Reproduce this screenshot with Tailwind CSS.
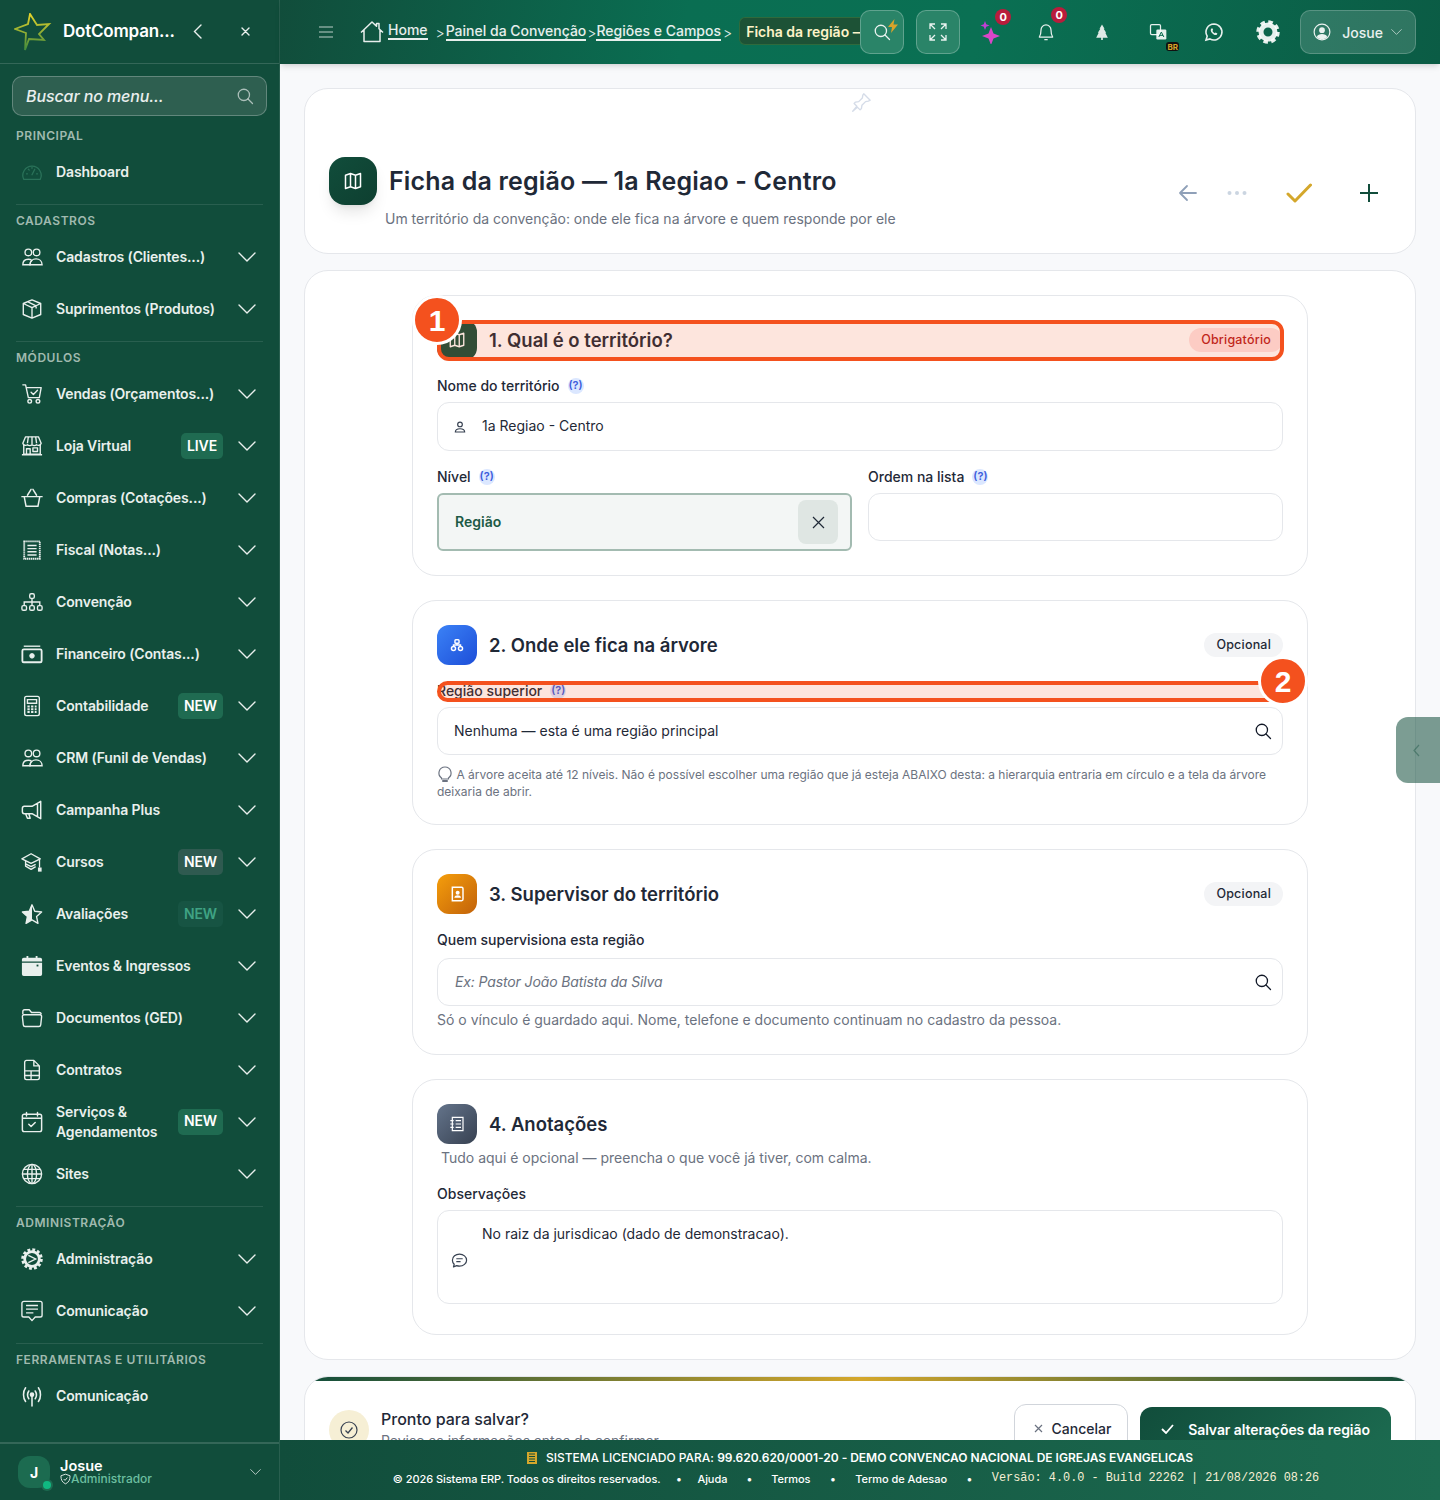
<!DOCTYPE html>
<html lang="pt-BR">
<head>
    <meta charset="UTF-8">
    <meta name="viewport" content="width=device-width, initial-scale=1.0">
    <title>Ficha da região</title>
    <script src="https://cdn.jsdelivr.net/npm/@tailwindcss/browser@4"></script>
</head>
<body class="bg-[#f8f9fb] text-gray-800 font-['Inter',sans-serif]">

    <!-- Icones repetidos -->
    <svg class="hidden" xmlns="http://www.w3.org/2000/svg">
        <symbol id="chev" viewBox="0 0 18 10"><path d="M1 1l8 8 8-8" fill="none" stroke="currentColor" stroke-width="1.4" stroke-linecap="round" stroke-linejoin="round"/></symbol>
        <symbol id="users" viewBox="0 0 24 24"><g fill="none" stroke="currentColor" stroke-width="1.5"><circle cx="8" cy="7" r="3.6"/><circle cx="17" cy="7" r="3.6"/><path d="M2 20.500c0-3.800 2.600-6 6-6 1.400 0 2.800.4 3.800 1.300-1.300 1-2 2.600-2 4.700z"/><path d="M9.800 20.500c0-4 3-6.500 6.600-6.500s6.600 2.500 6.600 6.500z"/></g></symbol>
        <symbol id="search" viewBox="0 0 24 24"><g fill="none" stroke="currentColor" stroke-width="1.700" stroke-linecap="round"><circle cx="10.500" cy="10.500" r="7.500"/><path d="M16 16l6 6"/></g></symbol>
        <symbol id="map" viewBox="0 0 24 24"><path d="M3 5l6-2 6 2 6-2v16l-6 2-6-2-6 2zM9 3v16M15 5v16" fill="none" stroke="currentColor" stroke-width="1.800" stroke-linejoin="round"/></symbol>
        <symbol id="person" viewBox="0 0 24 24"><g fill="none" stroke="currentColor" stroke-width="2"><circle cx="12" cy="7.500" r="4"/><path d="M4 20.500c0-4 3.500-5.500 8-5.500s8 1.500 8 5.500z"/></g></symbol>
    </svg>

    <div class="relative flex w-[1440px] h-[1500px] overflow-hidden">

        <!-- Sidebar -->
        <aside class="flex flex-col w-[280px] h-full shrink-0 bg-[#114d3b] text-[#e9f0ed] border-r border-white/10">
            <div class="flex items-center h-16 shrink-0 border-b border-white/15 pl-[14px]">
                <svg class="w-[38px] h-[38px]" viewBox="0 0 38 38"><defs><linearGradient id="logo" x1="0" y1="0" x2="0" y2="1"><stop offset="0" stop-color="#e6d32a"/><stop offset="1" stop-color="#3f8a3d"/></linearGradient></defs><path d="M16 1l7 11 12-1-10 10 5 6-15-1-4 11 1-17-11-4 13-5z" fill="none" stroke="url(#logo)" stroke-width="1.800" stroke-linejoin="miter"/></svg>
                <span class="ml-[11px] w-[112px] text-[17px] font-semibold tracking-[-0.2px] text-white whitespace-nowrap">DotCompan...</span>
                <svg class="w-[9px] h-[15px] ml-[18px]" viewBox="0 0 9 15"><path d="M8 1L1.500 7.500 8 14" fill="none" stroke="currentColor" stroke-width="1.400" stroke-linecap="round"/></svg>
                <svg class="w-[9px] h-[9px] ml-[39px]" viewBox="0 0 9 9"><path d="M1 1l7 7M8 1L1 8" fill="none" stroke="currentColor" stroke-width="1.400" stroke-linecap="round"/></svg>
            </div>

            <div class="flex items-center h-10 mt-3 mx-3 px-[13px] rounded-[10px] bg-[#2e5f50] border border-white/25">
                <span class="flex-1 text-[16px] italic font-medium tracking-[-0.1px] text-white/90">Buscar no menu...</span>
                <svg class="w-[18px] h-[18px] -mr-[1px] text-white/60"><use href="#search"/></svg>
            </div>

            <nav class="flex-1 mt-[11px] tracking-[-0.12px]">
                <p class="h-4 mx-4 mb-[3px] text-[12px] leading-[18px] font-semibold tracking-[0.55px] text-[#a0baaf]">PRINCIPAL</p>
                <a class="flex items-center h-[52px] pl-[21px] pr-[23px] text-[14px] font-semibold">
                    <svg class="w-[22px] h-[22px] text-[#2a7259]" viewBox="0 0 24 24"><g fill="none" stroke="currentColor" stroke-width="1.400" stroke-linecap="round"><path d="M3 20a10 10 0 1 1 18 0z"/><path d="M12 15l3-6M6 14h1M17 14h1M8 9l1 1M12 7v1"/></g></svg>
                    <span class="ml-[13px] pb-[2px]">Dashboard</span>
                </a>

                <div class="mx-4 mt-[6px] pt-[7px] border-t border-white/10">
                    <p class="h-4 mb-[3px] text-[12px] leading-[18px] font-semibold tracking-[0.55px] text-[#a0baaf]">CADASTROS</p>
                </div>
                <a class="flex items-center h-[52px] pl-[21px] pr-[23px] text-[14px] font-semibold">
                    <svg class="w-[22px] h-[22px]"><use href="#users"/></svg>
                    <span class="ml-[13px] pb-[2px] flex-1">Cadastros (Clientes...)</span>
                    <svg class="w-[18px] h-[10px]"><use href="#chev"/></svg>
                </a>
                <a class="flex items-center h-[52px] pl-[21px] pr-[23px] text-[14px] font-semibold">
                    <svg class="w-[22px] h-[22px]" viewBox="0 0 24 24"><path d="M12 2l9.500 4v12L12 22l-9.500-4V6zM2.500 6l9.500 4.500L21.500 6M12 10.500V22M7 4l9.500 4.500v3" fill="none" stroke="currentColor" stroke-width="1.500" stroke-linejoin="round"/></svg>
                    <span class="ml-[13px] pb-[2px] flex-1">Suprimentos (Produtos)</span>
                    <svg class="w-[18px] h-[10px]"><use href="#chev"/></svg>
                </a>

                <div class="mx-4 mt-[6px] pt-[7px] border-t border-white/10">
                    <p class="h-4 mb-[3px] text-[12px] leading-[18px] font-semibold tracking-[0.55px] text-[#a0baaf]">MÓDULOS</p>
                </div>
                <a class="flex items-center h-[52px] pl-[21px] pr-[23px] text-[14px] font-semibold">
                    <svg class="w-[22px] h-[22px]" viewBox="0 0 24 24"><g fill="none" stroke="currentColor" stroke-width="1.500" stroke-linecap="round" stroke-linejoin="round"><path d="M2 2h3l3 14h12l2-11H6"/><path d="M11 10l2.500 2.500L18 8"/><circle cx="9.500" cy="20" r="2"/><circle cx="18.500" cy="20" r="2"/></g></svg>
                    <span class="ml-[13px] pb-[2px] flex-1">Vendas (Orçamentos...)</span>
                    <svg class="w-[18px] h-[10px]"><use href="#chev"/></svg>
                </a>
                <a class="flex items-center h-[52px] pl-[21px] pr-[23px] text-[14px] font-semibold">
                    <svg class="w-[22px] h-[22px]" viewBox="0 0 24 24"><g fill="none" stroke="currentColor" stroke-width="1.500" stroke-linejoin="round"><path d="M5 2h14l3 7a3 3 0 0 1-5 1.500 3.500 3.500 0 0 1-5 0 3.500 3.500 0 0 1-5 0A3 3 0 0 1 2 9z"/><path d="M3 11v10h18V11M1 21.500h22M6 21v-6h4v6M13 14h5v4h-5z"/><path d="M8 2L7 9M16 2l1 7M12 2v8"/></g></svg>
                    <span class="ml-[13px] pb-[2px] flex-1">Loja Virtual</span>
                    <span class="flex items-center h-[26px] px-[6px] pb-[2px] mr-[15px] rounded-[5px] bg-[#1f6b51] text-[14px] font-semibold text-white">LIVE</span>
                    <svg class="w-[18px] h-[10px]"><use href="#chev"/></svg>
                </a>
                <a class="flex items-center h-[52px] pl-[21px] pr-[23px] text-[14px] font-semibold">
                    <svg class="w-[22px] h-[22px]" viewBox="0 0 24 24"><path d="M1 10.500h22M3.500 10.500l2 10.500h13l2-10.500M7 9l4-6.500M17 9l-4-6.500" fill="none" stroke="currentColor" stroke-width="1.600" stroke-linecap="round" stroke-linejoin="round"/></svg>
                    <span class="ml-[13px] pb-[2px] flex-1">Compras (Cotações...)</span>
                    <svg class="w-[18px] h-[10px]"><use href="#chev"/></svg>
                </a>
                <a class="flex items-center h-[52px] pl-[21px] pr-[23px] text-[14px] font-semibold">
                    <svg class="w-[22px] h-[22px]" viewBox="0 0 24 24"><path d="M3.500 2.500h17v19h-17z" fill="none" stroke="currentColor" stroke-width="2" stroke-dasharray="1.600 .6"/><path d="M7 7h10M7 10.500h10M7 14h10M7 17.500h10" fill="none" stroke="currentColor" stroke-width="1.600"/></svg>
                    <span class="ml-[13px] pb-[2px] flex-1">Fiscal (Notas...)</span>
                    <svg class="w-[18px] h-[10px]"><use href="#chev"/></svg>
                </a>
                <a class="flex items-center h-[52px] pl-[21px] pr-[23px] text-[14px] font-semibold">
                    <svg class="w-[22px] h-[22px]" viewBox="0 0 24 24"><g fill="none" stroke="currentColor" stroke-width="1.500"><rect x="9.500" y="3" width="5" height="5" rx="1.500"/><rect x="1" y="16" width="5" height="5" rx="1.500"/><rect x="9.500" y="16" width="5" height="5" rx="1.500"/><rect x="18" y="16" width="5" height="5" rx="1.500"/><path d="M12 8v8M3.500 16v-4h17v4"/></g></svg>
                    <span class="ml-[13px] pb-[2px] flex-1">Convenção</span>
                    <svg class="w-[18px] h-[10px]"><use href="#chev"/></svg>
                </a>
                <a class="flex items-center h-[52px] pl-[21px] pr-[23px] text-[14px] font-semibold">
                    <svg class="w-[22px] h-[22px]" viewBox="0 0 24 24"><g fill="none" stroke="currentColor"><path d="M3 3.500h18" stroke-width="1.500"/><rect x="1.500" y="7" width="21" height="14" rx="1.500" stroke-width="2"/><circle cx="12" cy="14" r="2.500" fill="currentColor"/></g></svg>
                    <span class="ml-[13px] pb-[2px] flex-1">Financeiro (Contas...)</span>
                    <svg class="w-[18px] h-[10px]"><use href="#chev"/></svg>
                </a>
                <a class="flex items-center h-[52px] pl-[21px] pr-[23px] text-[14px] font-semibold">
                    <svg class="w-[22px] h-[22px]" viewBox="0 0 24 24"><g fill="none" stroke="currentColor" stroke-width="1.500"><rect x="4" y="1.500" width="16" height="21" rx="2"/><path d="M7 5h10v4H7z"/><path d="M7 12.500h2.500M11 12.500h2.500M15 12.500h2M7 15.500h2.500M11 15.500h2.500M15 15.500h2M7 18.500h2.500M11 18.500h2.500M15 18.500h2" stroke-width="2"/></g></svg>
                    <span class="ml-[13px] pb-[2px] flex-1">Contabilidade</span>
                    <span class="flex items-center h-[26px] px-[6px] pb-[2px] mr-[15px] rounded-[5px] bg-[#1f6b51] text-[14px] font-semibold text-white">NEW</span>
                    <svg class="w-[18px] h-[10px]"><use href="#chev"/></svg>
                </a>
                <a class="flex items-center h-[52px] pl-[21px] pr-[23px] text-[14px] font-semibold">
                    <svg class="w-[22px] h-[22px]"><use href="#users"/></svg>
                    <span class="ml-[13px] pb-[2px] flex-1">CRM (Funil de Vendas)</span>
                    <svg class="w-[18px] h-[10px]"><use href="#chev"/></svg>
                </a>
                <a class="flex items-center h-[52px] pl-[21px] pr-[23px] text-[14px] font-semibold">
                    <svg class="w-[22px] h-[22px]" viewBox="0 0 24 24"><path d="M21.500 2.500v19L12 16H3.500A2 2 0 0 1 1.500 14V10a2 2 0 0 1 2-2H12zM5 16l2 5h3l-1.500-5M18 5v14" fill="none" stroke="currentColor" stroke-width="1.600" stroke-linejoin="round"/></svg>
                    <span class="ml-[13px] pb-[2px] flex-1">Campanha Plus</span>
                    <svg class="w-[18px] h-[10px]"><use href="#chev"/></svg>
                </a>
                <a class="flex items-center h-[52px] pl-[21px] pr-[23px] text-[14px] font-semibold">
                    <svg class="w-[22px] h-[22px]" viewBox="0 0 24 24"><g fill="none" stroke="currentColor" stroke-width="1.500" stroke-linejoin="round"><path d="M11 3L1 8.500l10 5 10-5z"/><path d="M5 11v5.500l6 3.500 5-3M5 14l6 3 5-2.500"/></g><rect x="19.500" y="9" width="1.400" height="9" fill="currentColor"/><rect x="18.500" y="18" width="4" height="4.500" fill="currentColor"/></svg>
                    <span class="ml-[13px] pb-[2px] flex-1">Cursos</span>
                    <span class="flex items-center h-[26px] px-[6px] pb-[2px] mr-[15px] rounded-[5px] bg-[#2f5a50] text-[14px] font-semibold text-white">NEW</span>
                    <svg class="w-[18px] h-[10px]"><use href="#chev"/></svg>
                </a>
                <a class="flex items-center h-[52px] pl-[21px] pr-[23px] text-[14px] font-semibold">
                    <svg class="w-[22px] h-[22px]" viewBox="0 0 24 24"><path d="M12 2l3 7 7.500.800-5.500 5 1.500 7.400L12 18.500 5.500 22.200 7 14.800l-5.500-5L9 9z" fill="none" stroke="currentColor" stroke-width="1.500" stroke-linejoin="round"/><path d="M12 2L9 9l-7.500.800 5.500 5-1.500 7.400L12 18.500z" fill="currentColor"/></svg>
                    <span class="ml-[13px] pb-[2px] flex-1">Avaliações</span>
                    <span class="flex items-center h-[26px] px-[6px] pb-[2px] mr-[15px] rounded-[5px] bg-[#175443] text-[14px] font-semibold text-[#3fa384]">NEW</span>
                    <svg class="w-[18px] h-[10px]"><use href="#chev"/></svg>
                </a>
                <a class="flex items-center h-[52px] pl-[21px] pr-[23px] text-[14px] font-semibold">
                    <svg class="w-[22px] h-[22px]" viewBox="0 0 24 24"><path d="M6 1h2v2h8V1h2v2h3a2 2 0 0 1 2 2v2H1V5a2 2 0 0 1 2-2h3zM1 8.500h22V21a2 2 0 0 1-2 2H3a2 2 0 0 1-2-2z" fill="currentColor"/><rect x="17" y="10.500" width="2" height="2" fill="#114d3b"/></svg>
                    <span class="ml-[13px] pb-[2px] flex-1">Eventos &amp; Ingressos</span>
                    <svg class="w-[18px] h-[10px]"><use href="#chev"/></svg>
                </a>
                <a class="flex items-center h-[52px] pl-[21px] pr-[23px] text-[14px] font-semibold">
                    <svg class="w-[22px] h-[22px]" viewBox="0 0 24 24"><path d="M2 8V5a2 2 0 0 1 2-2h5l2.500 3H20a2 2 0 0 1 2 2M3.500 8.500h17a2 2 0 0 1 2 2l-1 9a2 2 0 0 1-2 1.800H4.500a2 2 0 0 1-2-1.800l-1-9a2 2 0 0 1 2-2z" fill="none" stroke="currentColor" stroke-width="1.500" stroke-linejoin="round"/></svg>
                    <span class="ml-[13px] pb-[2px] flex-1">Documentos (GED)</span>
                    <svg class="w-[18px] h-[10px]"><use href="#chev"/></svg>
                </a>
                <a class="flex items-center h-[52px] pl-[21px] pr-[23px] text-[14px] font-semibold">
                    <svg class="w-[22px] h-[22px]" viewBox="0 0 24 24"><path d="M14 1.500H6a2 2 0 0 0-2 2v17a2 2 0 0 0 2 2h12a2 2 0 0 0 2-2V7.500zM14 1.500v6h6M4 13h16M4 18h16M11 13v9" fill="none" stroke="currentColor" stroke-width="1.500" stroke-linejoin="round"/></svg>
                    <span class="ml-[13px] pb-[2px] flex-1">Contratos</span>
                    <svg class="w-[18px] h-[10px]"><use href="#chev"/></svg>
                </a>
                <a class="flex items-center h-[52px] pl-[21px] pr-[23px] text-[14px] font-semibold leading-5">
                    <svg class="w-[22px] h-[22px] shrink-0" viewBox="0 0 24 24"><path d="M6 1.500v4M18 1.500v4M1.500 8h21M3.500 3.500h17a2 2 0 0 1 2 2V20.500a2 2 0 0 1-2 2h-17a2 2 0 0 1-2-2V5.500a2 2 0 0 1 2-2zM8.500 14.500l2.500 2.500 4.500-4.500" fill="none" stroke="currentColor" stroke-width="1.600" stroke-linecap="round" stroke-linejoin="round"/></svg>
                    <span class="ml-[13px] flex-1">Serviços &amp;<br>Agendamentos</span>
                    <span class="flex items-center h-[26px] px-[6px] pb-[2px] mr-[15px] rounded-[5px] bg-[#1f6b51] text-[14px] font-semibold text-white">NEW</span>
                    <svg class="w-[18px] h-[10px]"><use href="#chev"/></svg>
                </a>
                <a class="flex items-center h-[52px] pl-[21px] pr-[23px] text-[14px] font-semibold">
                    <svg class="w-[22px] h-[22px]" viewBox="0 0 24 24"><g fill="none" stroke="currentColor" stroke-width="1.500"><circle cx="12" cy="12" r="10.500"/><ellipse cx="12" cy="12" rx="5" ry="10.500"/><path d="M12 1.500v21M1.500 12h21M3 7h18M3 17h18"/></g></svg>
                    <span class="ml-[13px] pb-[2px] flex-1">Sites</span>
                    <svg class="w-[18px] h-[10px]"><use href="#chev"/></svg>
                </a>

                <div class="mx-4 mt-[6px] pt-[7px] border-t border-white/10">
                    <p class="h-4 mb-[3px] text-[12px] leading-[18px] font-semibold tracking-[0.55px] text-[#a0baaf]">ADMINISTRAÇÃO</p>
                </div>
                <a class="flex items-center h-[52px] pl-[21px] pr-[23px] text-[14px] font-semibold">
                    <svg class="w-[22px] h-[22px]" viewBox="0 0 24 24"><g fill="none" stroke="currentColor"><circle cx="12" cy="12" r="8" stroke-width="3"/><circle cx="12" cy="12" r="10" stroke-width="3.500" stroke-dasharray="3 2.240"/><path d="M8 8l8 4-8 4" stroke-width="1.500"/></g></svg>
                    <span class="ml-[13px] pb-[2px] flex-1">Administração</span>
                    <svg class="w-[18px] h-[10px]"><use href="#chev"/></svg>
                </a>
                <a class="flex items-center h-[52px] pl-[21px] pr-[23px] text-[14px] font-semibold">
                    <svg class="w-[22px] h-[22px]" viewBox="0 0 24 24"><path d="M3 1.500h18a2 2 0 0 1 2 2v13a2 2 0 0 1-2 2h-5.500L12 22.500 8.500 18.500H3a2 2 0 0 1-2-2v-13a2 2 0 0 1 2-2zM5.500 6h13M5.500 10h13M5.500 14h8" fill="none" stroke="currentColor" stroke-width="1.500" stroke-linejoin="round"/></svg>
                    <span class="ml-[13px] pb-[2px] flex-1">Comunicação</span>
                    <svg class="w-[18px] h-[10px]"><use href="#chev"/></svg>
                </a>

                <div class="mx-4 mt-[6px] pt-[7px] border-t border-white/10">
                    <p class="h-4 mb-[3px] text-[12px] leading-[18px] font-semibold tracking-[0.55px] text-[#a0baaf]">FERRAMENTAS E UTILITÁRIOS</p>
                </div>
                <a class="flex items-center h-[52px] pl-[21px] pr-[23px] text-[14px] font-semibold">
                    <svg class="w-[22px] h-[22px]" viewBox="0 0 24 24"><g fill="none" stroke="currentColor" stroke-width="1.700" stroke-linecap="round"><path d="M5 3C2 7 2 14 5 18M19 3c3 4 3 11 0 15M8.500 6.500c-1.600 2.500-1.600 6 0 8.500M15.500 6.500c1.600 2.500 1.600 6 0 8.500M12 12v11"/></g><circle cx="12" cy="10.500" r="2.500" fill="currentColor"/></svg>
                    <span class="ml-[13px] pb-[2px]">Comunicação</span>
                </a>
            </nav>

            <div class="flex items-center h-[58px] shrink-0 border-t-2 border-white/15 pl-[18px] pr-[18px]">
                <div class="relative flex items-center justify-center w-8 h-8 rounded-xl bg-[#1c6b50] text-[14px] font-bold text-white">
                    J
                    <span class="absolute -right-[1px] -bottom-[1px] w-[8px] h-[8px] rounded-full bg-[#10b981] ring-2 ring-[#1c6b50]"></span>
                </div>
                <div class="flex-1 ml-[10px]">
                    <p class="text-[14.500px] leading-[13px] font-semibold text-white">Josue</p>
                    <p class="flex items-center text-[12px] leading-[13px] font-medium text-[#6cbfa0]">
                        <svg class="w-[11px] h-[12px]" viewBox="0 0 24 24"><path d="M12 1.500l10 3.500c0 9-3 14.500-10 17.500C5 19.500 2 14 2 5zM8 12l3 3 5-6" fill="none" stroke="#e9f0ed" stroke-width="2"/></svg>
                        Administrador
                    </p>
                </div>
                <svg class="w-[11px] h-[6px] text-white/80"><use href="#chev"/></svg>
            </div>
        </aside>

        <!-- Coluna principal -->
        <div class="flex flex-col flex-1 min-w-0">

            <!-- Topbar -->
            <header class="flex items-center h-16 shrink-0 pl-[39px] shadow-md bg-[linear-gradient(100deg,#114d3b_0%,#0a6e52_35%,#0a7053_60%,#0b5c45_100%)] text-white/90">
                <svg class="w-[14px] h-[12px]" viewBox="0 0 14 12"><path d="M0 1h14M0 6h14M0 11h14" stroke="currentColor" stroke-width="1.200" opacity=".8"/></svg>
                <svg class="w-6 h-6 ml-[27px]" viewBox="0 0 24 24"><path d="M1 12.500L12 2l4.500 4.300V3.500h2.500v5.200l4 3.800M4 10v11.500h16V10" fill="none" stroke="currentColor" stroke-width="1.500" stroke-linejoin="round"/></svg>
                <a class="ml-[4px] mb-[3px] border-b-2 border-white/90 text-[14px] leading-[17px] font-medium">Home</a>
                <span class="ml-[8px] text-[14px] font-light">&gt;</span>
                <a class="ml-[1px] mb-[2px] border-b-2 border-white/90 text-[14px] leading-[17px] font-medium whitespace-nowrap">Painel da Convenção</a>
                <span class="ml-[1px] text-[14px] font-light">&gt;</span>
                <a class="mb-[2px] border-b-2 border-white/90 text-[14px] leading-[17px] font-medium whitespace-nowrap">Regiões e Campos</a>
                <span class="ml-[2px] text-[14px] font-light">&gt;</span>
                <div class="ml-[7px] mb-[2px] flex items-center h-7 w-[121px] shrink-0 pl-[6px] rounded-l-md bg-[#1d5236] border border-[#2f6a3c] border-r-0 overflow-hidden text-[14px] font-semibold text-[#fdf3c8] whitespace-nowrap">Ficha da região —</div>

                <button class="relative flex items-center justify-center w-11 h-11 shrink-0 rounded-[10px] bg-[#2a8468] border border-white/25">
                    <svg class="w-[18px] h-[18px]"><use href="#search"/></svg>
                    <svg class="absolute top-[8px] right-[5px] w-[10px] h-[14px]" viewBox="0 0 10 14"><path d="M6.500 0L0 8h4l-1 6 7-8.500H5.500z" fill="#d9a32a"/></svg>
                </button>
                <button class="flex items-center justify-center w-11 h-11 shrink-0 ml-3 rounded-[10px] bg-[#2a8468] border border-white/25">
                    <svg class="w-[18px] h-[18px]" viewBox="0 0 18 18"><path d="M1 6V1h5M1 1l5 5M12 1h5v5M17 1l-5 5M1 12v5h5M1 17l5-5M17 12v5h-5M17 17l-5-5" fill="none" stroke="currentColor" stroke-width="1.300"/></svg>
                </button>
                <div class="relative w-6 h-6 shrink-0 ml-[19px]">
                    <svg class="w-6 h-6" viewBox="0 0 24 24"><path d="M12 7l2.500 6.500L21 16l-6.500 2.500L12 25l-2.500-6.500L3 16l6.500-2.500z" fill="#d946c8"/><path d="M6 1l1.200 3.300L10.500 5.500 7.200 6.800 6 10 4.800 6.800 1.500 5.500l3.300-1.200z" fill="#c13fd4"/></svg>
                    <span class="absolute -top-[11px] left-[16px] flex items-center justify-center w-4 h-4 rounded-full bg-[#b91c3c] text-[11px] font-bold text-white">0</span>
                </div>
                <div class="relative w-6 h-6 shrink-0 ml-[31px]">
                    <svg class="w-5 h-5 m-[2px]" viewBox="0 0 24 24"><path d="M12 3.500a6 6 0 0 0-6 6c0 5-1 7-2 8.500h16c-1-1.500-2-3.500-2-8.500a6 6 0 0 0-6-6zM10 21h4" fill="none" stroke="currentColor" stroke-width="1.500" stroke-linejoin="round"/></svg>
                    <span class="absolute -top-[13px] left-[17px] flex items-center justify-center w-4 h-4 rounded-full bg-[#b91c3c] text-[11px] font-bold text-white">0</span>
                </div>
                <svg class="w-5 h-5 shrink-0 ml-[34px] text-[#dfeae6]" viewBox="0 0 24 24"><path d="M12 3l3 5h-1l3 5h-1l3 6h-6v2.500h-2V19H5l3-6H7l3-5H9z" fill="currentColor"/></svg>
                <div class="relative w-6 h-6 shrink-0 ml-[34px]">
                    <svg class="w-5 h-5 m-[2px]" viewBox="0 0 24 24"><rect x="3" y="3" width="12" height="12" rx="1.500" fill="none" stroke="currentColor" stroke-width="1.500"/><rect x="10" y="9" width="12" height="12" rx="1.500" fill="currentColor"/><path d="M13 18l3-6 3 6M14 16h4" fill="none" stroke="#0a6a4e" stroke-width="1.200"/></svg>
                    <span class="absolute -bottom-[7px] left-[20px] flex items-center justify-center w-[13px] h-[9px] rounded-[3px] bg-[#111] text-[8px] font-bold text-[#d9a32a]">BR</span>
                </div>
                <svg class="w-6 h-6 shrink-0 ml-8" viewBox="0 0 24 24"><path d="M12 4a8 8 0 0 0-6.800 12.200L4 20l3.900-1.100A8 8 0 1 0 12 4z" fill="none" stroke="currentColor" stroke-width="1.600"/><path d="M9.500 8.500c-1.200.8-1 2.800.5 4.500s3.200 2.600 4.800 1.800l.6-1.300-1.800-1-.8.800c-1-.4-2-1.400-2.400-2.500l.8-.7-.9-1.900z" fill="currentColor"/></svg>
                <svg class="w-6 h-6 shrink-0 ml-[30px]" viewBox="0 0 24 24"><circle cx="12" cy="12" r="7" fill="none" stroke="currentColor" stroke-width="5"/><circle cx="12" cy="12" r="10" fill="none" stroke="currentColor" stroke-width="3.500" stroke-dasharray="4.500 3.350"/></svg>
                <button class="flex items-center w-[116px] h-11 shrink-0 ml-5 pl-[12px] rounded-[10px] bg-white/15 border border-white/20">
                    <svg class="w-[18px] h-[18px]" viewBox="0 0 24 24"><circle cx="12" cy="12" r="10.500" fill="none" stroke="currentColor" stroke-width="1.600"/><circle cx="12" cy="9.500" r="3.800" fill="currentColor"/><path d="M5 18.500c1-3 4-4 7-4s6 1 7 4c-2 2-4.500 3-7 3s-5-1-7-3z" fill="currentColor"/></svg>
                    <span class="ml-[11px] text-[14px] font-medium">Josue</span>
                    <svg class="w-[11px] h-[6px] ml-2 text-white/70"><use href="#chev"/></svg>
                </button>
            </header>

            <main class="flex-1 min-h-0 px-6 pt-6">

                <!-- Cabecalho da ficha -->
                <section class="relative h-[166px] rounded-3xl border border-[#e5e7eb] bg-white">
                    <svg class="absolute left-[545px] top-[3px] w-[22px] h-[22px] text-[#d5dce8]" viewBox="0 0 24 24"><path d="M15 2l7 7-2 1-3 .500-4 4-.500 3.500-1.500 1.500-3-3L3 21l4.500-5.500-3-3L6 11l3.500-.500 4-4 .500-3z" fill="none" stroke="currentColor" stroke-width="1.500" stroke-linejoin="round"/></svg>
                    <div class="flex pl-6 pt-[68px]">
                        <div class="flex items-center justify-center w-12 h-12 shrink-0 rounded-2xl bg-[linear-gradient(135deg,#114d3b,#0e3f30)] shadow-lg text-white">
                            <svg class="w-5 h-5"><use href="#map"/></svg>
                        </div>
                        <div class="ml-3">
                            <h1 class="text-[25px] leading-[48px] font-semibold tracking-[0.17px] text-[#1f2937] whitespace-nowrap">Ficha da região — 1a Regiao - Centro</h1>
                            <p class="-ml-1 mt-[4px] text-[14px] leading-5 text-[#6b7280]">Um território da convenção: onde ele fica na árvore e quem responde por ele</p>
                        </div>
                    </div>
                    <div class="absolute top-[94px] right-[37px] flex items-center">
                        <svg class="w-5 h-5 text-[#8fa0b8]" viewBox="0 0 20 20"><path d="M18 10H2M9 3l-7 7 7 7" fill="none" stroke="currentColor" stroke-width="1.800" stroke-linecap="round" stroke-linejoin="round"/></svg>
                        <svg class="w-5 h-[6px] ml-[29px] text-[#cbd5e1]" viewBox="0 0 20 6"><circle cx="2.500" cy="3" r="2" fill="currentColor"/><circle cx="10" cy="3" r="2" fill="currentColor"/><circle cx="17.500" cy="3" r="2" fill="currentColor"/></svg>
                        <svg class="w-[26px] h-5 ml-[39px] text-[#d4a72c]" viewBox="0 0 26 20"><path d="M2 11l7 7L24.500 2" fill="none" stroke="currentColor" stroke-width="3" stroke-linecap="round" stroke-linejoin="round"/></svg>
                        <svg class="w-[18px] h-[18px] ml-[48px] text-[#114d3b]" viewBox="0 0 18 18"><path d="M9 0v18M0 9h18" stroke="currentColor" stroke-width="2"/></svg>
                    </div>
                </section>

                <!-- Formulario -->
                <section class="mt-4 rounded-3xl border border-[#e5e7eb] bg-white pt-6 pb-6">
                    <div class="flex flex-col gap-6 w-[896px] mx-auto">

                        <!-- 1. Territorio -->
                        <div class="relative rounded-3xl border border-[#e5e7eb] p-6">
                            <div class="flex items-center h-10">
                                <div class="flex items-center justify-center w-10 h-10 rounded-xl bg-[#114d3b] text-white"><svg class="w-[18px] h-[18px]"><use href="#map"/></svg></div>
                                <h2 class="flex-1 ml-3 pt-[2px] text-[18.500px] font-semibold text-[#1f2937]">1. Qual é o território?</h2>
                                <span class="flex items-center h-6 px-3 rounded-full bg-[#fee2e2] text-[12.500px] font-medium tracking-[0.2px] text-[#b91c1c]">Obrigatório</span>
                            </div>
                            <label class="flex items-center h-5 pb-[1px] mt-4 text-[14px] font-medium text-[#1f2937]">Nome do território
                                <span class="flex items-center justify-center w-4 h-4 ml-2 rounded-full bg-[#dbe7ff] text-[11px] font-semibold text-[#3b5bdb]">(?)</span>
                            </label>
                            <div class="flex items-center h-[49px] mt-[6px] rounded-xl border border-[#e5e7eb] pl-[15px]">
                                <svg class="w-[14px] h-[14px] text-[#374151]"><use href="#person"/></svg>
                                <input class="ml-[15px] pb-[2px] flex-1 text-[14px] text-[#1f2937] outline-none" value="1a Regiao - Centro">
                            </div>
                            <div class="grid grid-cols-2 gap-4 mt-4">
                                <div>
                                    <label class="flex items-center h-5 pb-[1px] text-[14px] font-medium text-[#1f2937]">Nível
                                        <span class="flex items-center justify-center w-4 h-4 ml-2 rounded-full bg-[#dbe7ff] text-[11px] font-semibold text-[#3b5bdb]">(?)</span>
                                    </label>
                                    <div class="flex items-center h-[58px] mt-[6px] pl-4 pr-3 rounded-md border-2 border-[#a3bbb1] bg-[#f3f6f5]">
                                        <span class="flex-1 pb-[2px] text-[14px] font-semibold text-[#1d5a45]">Região</span>
                                        <span class="flex items-center justify-center w-10 h-11 rounded-lg bg-[#dfe6e3]">
                                            <svg class="w-[13px] h-[13px]" viewBox="0 0 13 13"><path d="M1 1l11 11M12 1L1 12" stroke="#1f2937" stroke-width="1.200"/></svg>
                                        </span>
                                    </div>
                                </div>
                                <div>
                                    <label class="flex items-center h-5 pb-[1px] text-[14px] font-medium text-[#1f2937]">Ordem na lista
                                        <span class="flex items-center justify-center w-4 h-4 ml-2 rounded-full bg-[#dbe7ff] text-[11px] font-semibold text-[#3b5bdb]">(?)</span>
                                    </label>
                                    <input class="block w-full h-12 mt-[6px] rounded-xl border border-[#e5e7eb] outline-none">
                                </div>
                            </div>
                            <!-- Destaque do tour -->
                            <div class="absolute left-6 top-6 w-[847px] h-[41px] rounded-xl border-4 border-[#f4511e] bg-[rgba(244,81,30,0.15)]"></div>
                            <span class="absolute -left-[1px] -top-[1px] flex items-center justify-center w-[50px] h-[50px] rounded-full border-[3px] border-white bg-[#f4511e] text-[30px] font-bold text-white font-['Liberation_Sans',sans-serif]">1</span>
                        </div>

                        <!-- 2. Arvore -->
                        <div class="relative rounded-3xl border border-[#e5e7eb] p-6">
                            <div class="flex items-center h-10">
                                <div class="flex items-center justify-center w-10 h-10 rounded-xl bg-[linear-gradient(135deg,#3b82f6,#1d4ed8)] text-white">
                                    <svg class="w-[14px] h-[14px]" viewBox="0 0 24 24"><g fill="none" stroke="currentColor" stroke-width="2.500"><rect x="8.500" y="3" width="7" height="6" rx="1.500"/><circle cx="6" cy="18" r="3.500"/><circle cx="18" cy="18" r="3.500"/><path d="M12 9v3M6 14v-2h12v2"/></g></svg>
                                </div>
                                <h2 class="flex-1 ml-3 pt-[1px] text-[18.500px] font-semibold text-[#1f2937]">2. Onde ele fica na árvore</h2>
                                <span class="flex items-center h-6 px-3 rounded-full bg-[#f3f4f6] text-[12.500px] font-medium tracking-[0.2px] text-[#1f2937]">Opcional</span>
                            </div>
                            <label class="flex items-center h-5 pb-[1px] mt-4 text-[14px] font-medium text-[#1f2937]">Região superior
                                <span class="flex items-center justify-center w-4 h-4 ml-2 rounded-full bg-[#dbe7ff] text-[11px] font-semibold text-[#3b5bdb]">(?)</span>
                            </label>
                            <div class="flex items-center h-12 mt-[6px] rounded-xl border border-[#e5e7eb] pl-4 pr-[10px]">
                                <input class="flex-1 pb-[2px] text-[14px] text-[#1f2937] outline-none" value="Nenhuma — esta é uma região principal">
                                <svg class="w-[18px] h-[18px] text-[#111827]"><use href="#search"/></svg>
                            </div>
                            <p class="mt-[11px] text-[12px] leading-[17px] text-[#6b7280]">
                                <svg class="inline w-4 h-[17px] -mt-[2px]" viewBox="0 0 14 17"><path d="M7 1a6 6 0 0 0-3.500 10.900V13h7v-1.100A6 6 0 0 0 7 1z" fill="none" stroke="#6b7280" stroke-width="1.200"/><rect x="4" y="14" width="6" height="2" rx="1" fill="#6b7280"/></svg>
                                A árvore aceita até 12 níveis. Não é possível escolher uma região que já esteja ABAIXO desta: a hierarquia entraria em círculo e a tela da árvore deixaria de abrir.
                            </p>
                            <!-- Destaque do tour -->
                            <div class="absolute left-6 top-[80px] w-[846px] h-[21px] rounded-l-xl border-4 border-[#f4511e] bg-[rgba(244,81,30,0.15)]"></div>
                            <span class="absolute left-[845px] top-[55px] flex items-center justify-center w-[50px] h-[50px] rounded-full border-[3px] border-white bg-[#f4511e] text-[30px] font-bold text-white font-['Liberation_Sans',sans-serif]">2</span>
                        </div>

                        <!-- 3. Supervisor -->
                        <div class="rounded-3xl border border-[#e5e7eb] p-6">
                            <div class="flex items-center h-10">
                                <div class="flex items-center justify-center w-10 h-10 rounded-xl bg-[linear-gradient(135deg,#f59e0b,#c2620a)] text-white">
                                    <svg class="w-4 h-4" viewBox="0 0 24 24"><path d="M5 2h14a2 2 0 0 1 2 2v16a2 2 0 0 1-2 2H5z" fill="none" stroke="currentColor" stroke-width="2.200"/><circle cx="13" cy="10" r="3" fill="currentColor"/><path d="M8 17.500c.5-2.500 2.500-3.500 5-3.500s4.500 1 5 3.500z" fill="currentColor"/></svg>
                                </div>
                                <h2 class="flex-1 ml-3 pt-[2px] text-[18.500px] font-semibold text-[#1f2937]">3. Supervisor do território</h2>
                                <span class="flex items-center h-6 px-3 rounded-full bg-[#f3f4f6] text-[12.500px] font-medium tracking-[0.2px] text-[#1f2937]">Opcional</span>
                            </div>
                            <label class="block h-5 mt-4 text-[14px] leading-[20px] font-medium text-[#1f2937]">Quem supervisiona esta região</label>
                            <div class="flex items-center h-12 mt-2 rounded-xl border border-[#e5e7eb] pl-[17px] pr-[10px]">
                                <input class="flex-1 pb-[2px] text-[14px] italic tracking-[-0.13px] outline-none placeholder:text-[#6b7280]" placeholder="Ex: Pastor João Batista da Silva">
                                <svg class="w-[18px] h-[18px] text-[#111827]"><use href="#search"/></svg>
                            </div>
                            <p class="mt-1 text-[14px] leading-5 text-[#6b7280]">Só o vínculo é guardado aqui. Nome, telefone e documento continuam no cadastro da pessoa.</p>
                        </div>

                        <!-- 4. Anotacoes -->
                        <div class="rounded-3xl border border-[#e5e7eb] px-6 pt-6 pb-[30px]">
                            <div class="flex items-center h-10">
                                <div class="flex items-center justify-center w-10 h-10 rounded-xl bg-[linear-gradient(135deg,#64748b,#374151)] text-white">
                                    <svg class="w-4 h-4" viewBox="0 0 24 24"><path d="M5 2h16v20H5zM2 7h5M2 12h5M2 17h5M10 7h8M10 12h8M10 17h8" fill="none" stroke="currentColor" stroke-width="1.800"/></svg>
                                </div>
                                <h2 class="flex-1 ml-3 pt-[2px] text-[18.500px] font-semibold text-[#1f2937]">4. Anotações</h2>
                            </div>
                            <p class="mt-1 ml-1 text-[14px] leading-5 text-[#6b7280]">Tudo aqui é opcional — preencha o que você já tiver, com calma.</p>
                            <label class="block h-5 mt-4 text-[14px] leading-5 font-medium text-[#1f2937]">Observações</label>
                            <div class="flex items-center h-[94px] mt-[6px] rounded-xl border border-[#e5e7eb] pl-[13px]">
                                <svg class="w-[17px] h-[17px] mt-[6px] shrink-0 text-[#374151]" viewBox="0 0 24 24"><path d="M12 3C6.500 3 2 6.500 2 11.500c0 2.300 1 4.300 2.500 5.800L3.500 21l4.500-1.700c1.300.5 2.600.7 4 .7 5.500 0 10-3.800 10-8.500S17.500 3 12 3zM7.500 9.500h9M7.500 13.500h6" fill="none" stroke="currentColor" stroke-width="1.700" stroke-linejoin="round"/></svg>
                                <textarea class="self-start flex-1 h-full ml-[14px] pt-[13px] text-[14px] leading-[20px] text-[#1f2937] outline-none resize-none">No raiz da jurisdicao (dado de demonstracao).</textarea>
                            </div>
                        </div>
                    </div>
                </section>

                <!-- Barra de salvar -->
                <section class="mt-4 h-[140px] rounded-t-3xl border border-[#e5e7eb] bg-white overflow-hidden">
                    <div class="h-[4px] bg-[linear-gradient(90deg,#114d3b,#d4a72c,#114d3b)]"></div>
                    <div class="flex pl-6 pr-6 pt-[23px]">
                        <div class="flex items-center justify-center w-10 h-10 mt-[6px] rounded-full bg-[#f6efd5]">
                            <svg class="w-5 h-5 text-[#374151]" viewBox="0 0 20 20"><circle cx="10" cy="10" r="8" fill="none" stroke="currentColor" stroke-width="1.200"/><path d="M6.500 10.500l2.500 2.500 4.500-5.500" fill="none" stroke="currentColor" stroke-width="1.300"/></svg>
                        </div>
                        <div class="ml-3 mt-[3px] flex-1">
                            <p class="text-[16px] leading-6 font-medium text-[#1f2937]">Pronto para salvar?</p>
                            <p class="text-[14px] leading-5 text-[#6b7280]">Revise as informações antes de confirmar.</p>
                        </div>
                        <button class="flex items-center justify-center w-[114px] h-12 pl-[3px] rounded-xl border border-[#d1d5db] text-[14px] font-medium text-[#1f2937]">
                            <svg class="w-[9px] h-[9px] text-[#6b7280]" viewBox="0 0 9 9"><path d="M1 1l7 7M8 1L1 8" stroke="currentColor" stroke-width="1.200"/></svg>
                            <span class="ml-[9px]">Cancelar</span>
                        </button>
                        <button class="flex items-center justify-center w-[251px] h-11 mt-[3px] ml-3 rounded-xl bg-[linear-gradient(135deg,#114d3b,#1c6b50)] text-[14px] font-semibold tracking-[-0.07px] text-white">
                            <svg class="w-[13px] h-[10px]" viewBox="0 0 13 10"><path d="M1 5l4 4 7-8" fill="none" stroke="currentColor" stroke-width="1.800"/></svg>
                            <span class="ml-[14px]">Salvar alterações da região</span>
                        </button>
                    </div>
                </section>
            </main>
        </div>

        <!-- Aba lateral flutuante -->
        <div class="absolute right-0 top-[717px] flex items-center w-[44px] h-[66px] pl-[17px] rounded-l-xl bg-[#114d3b]/55">
            <svg class="w-[7px] h-[13px] text-[#114d3b]/40" viewBox="0 0 7 13"><path d="M6 1L1 6.500 6 12" fill="none" stroke="currentColor" stroke-width="1.200"/></svg>
        </div>

        <!-- Rodape fixo -->
        <footer class="absolute left-[280px] right-0 bottom-0 h-[60px] flex flex-col items-center bg-[linear-gradient(90deg,#114d3b,#1c6b50)] text-white">
            <p class="flex items-center h-[17px] mt-[9px] text-[12px] font-medium tracking-[-0.02px] whitespace-nowrap">
                <svg class="w-[10px] h-[12px] mr-[9px] text-[#d4a72c]" viewBox="0 0 10 12"><path d="M0 0h10v12H0z" fill="currentColor"/><path d="M2 2h6M2 4.500h6M2 7h6M2 9.500h6" stroke="#114d3b"/></svg>
                SISTEMA LICENCIADO PARA:&nbsp;<b class="font-semibold">99.620.620/0001-20 - DEMO CONVENCAO NACIONAL DE IGREJAS EVANGELICAS</b>
            </p>
            <p class="flex items-center mt-[4px] mr-[8px] text-[11px] font-medium tracking-[-0.05px] whitespace-nowrap">
                <span>© 2026 Sistema ERP. Todos os direitos reservados.</span>
                <span class="mx-[15.500px]">•</span>
                <a>Ajuda</a>
                <span class="mx-[19px]">•</span>
                <a>Termos</a>
                <span class="mx-[19.500px]">•</span>
                <a>Termo de Adesao</a>
                <span class="mx-[19.500px]">•</span>
                <span class="font-['Liberation_Mono',monospace] font-normal text-[11.870px] tracking-normal text-[#f6efd5]">Versão: 4.0.0 - Build 22262 | 21/08/2026 08:26</span>
            </p>
        </footer>
    </div>
</body>
</html>
